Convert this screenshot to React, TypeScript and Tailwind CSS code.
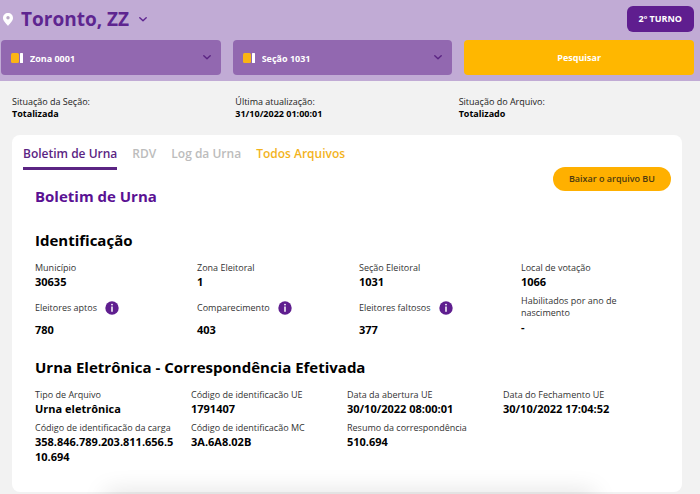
import clsx from "clsx";
import type { ReactNode } from "react";

type FieldProps = {
  label: string;
  value: string;
  info?: boolean;
  className?: string;
};

const summary = [
  { label: "Situação da Seção:", value: "Totalizada" },
  { label: "Última atualização:", value: "31/10/2022 01:00:01" },
  { label: "Situação do Arquivo:", value: "Totalizado" },
];

const identification: FieldProps[] = [
  { label: "Município", value: "30635" },
  { label: "Zona Eleitoral", value: "1" },
  { label: "Seção Eleitoral", value: "1031" },
  { label: "Local de votação", value: "1066" },
  { label: "Eleitores aptos", value: "780", info: true },
  { label: "Comparecimento", value: "403", info: true },
  { label: "Eleitores faltosos", value: "377", info: true },
  { label: "Habilitados por ano de nascimento", value: "-" },
];

const machine: FieldProps[] = [
  { label: "Tipo de Arquivo", value: "Urna eletrônica" },
  { label: "Código de identificacão UE", value: "1791407" },
  { label: "Data da abertura UE", value: "30/10/2022 08:00:01" },
  { label: "Data do Fechamento UE", value: "30/10/2022 17:04:52" },
  { label: "Código de identificacão da carga", value: "358.846.789.203.811.656.510.694" },
  { label: "Código de identificacão MC", value: "3A.6A8.02B" },
  { label: "Resumo da correspondência", value: "510.694" },
];

const tabs = [
  { label: "Boletim de Urna", className: "border-[#5b2483] text-[#5b2483]" },
  { label: "RDV", className: "border-transparent text-[#bcbcbc]" },
  { label: "Log da Urna", className: "border-transparent text-[#bcbcbc]" },
  { label: "Todos Arquivos", className: "border-transparent text-[#f3b31c]" },
];

const Chevron = ({ className }: { className?: string }) => (
  <svg viewBox="0 0 8 5" className={clsx("pointer-events-none h-[5px] w-2", className)} fill="none" aria-hidden="true">
    <path d="M0.8 0.8 4 3.8 7.2 0.8" stroke="currentColor" strokeWidth="1.4" strokeLinecap="round" strokeLinejoin="round" />
  </svg>
);

const PinIcon = () => (
  <svg viewBox="0 0 10 13" className="h-[13px] w-[10px]" aria-hidden="true">
    <path fill="#fff" d="M5 0C2.2 0 0 2.1 0 4.9 0 8.3 3.4 10.2 5 13c1.6-2.8 5-4.7 5-8.1C10 2.1 7.8 0 5 0Z" />
    <circle cx="5" cy="4.8" r="1.7" fill="#b9a9c6" />
  </svg>
);

const CardIcon = () => (
  <svg viewBox="0 0 12 10" className="pointer-events-none absolute left-[10px] h-[10px] w-3" aria-hidden="true">
    <rect width="8" height="10" rx="1.5" fill="#fbb414" />
    <rect x="9" width="3" height="10" rx="0.5" fill="#fff" />
  </svg>
);

const InfoIcon = () => (
  <svg viewBox="0 0 14 14" className="size-[14px]" aria-hidden="true">
    <circle cx="7" cy="7" r="6.7" fill="#5f1e8f" />
    <circle cx="7" cy="3.6" r="0.9" fill="#fff" />
    <path d="M7 5.5v5.3" stroke="#fff" strokeWidth="1.5" />
  </svg>
);

const FilterSelect = ({ label, value }: { label: string; value: string }) => (
  <div className="relative flex items-center">
    <CardIcon />
    <select
      aria-label={label}
      className="h-[35px] w-full appearance-none rounded-sm bg-[#9268b0] pt-[2px] pl-[29px] text-[9px] font-bold text-white"
    >
      <option>{value}</option>
    </select>
    <Chevron className="absolute right-[10px] text-[#5b2483]" />
  </div>
);

const Field = ({ label, value, info, className }: FieldProps) => (
  <div className={className}>
    <dt className={clsx("text-[9px] leading-3 text-[#333]", info && "flex h-[25px] items-center gap-2")}>
      {label}
      {info && (
        <button type="button" aria-label={`Informações: ${label}`}>
          <InfoIcon />
        </button>
      )}
    </dt>
    <dd className={clsx("text-[11px] leading-[15px] font-bold break-all", info && "pt-[2px]")}>{value}</dd>
  </div>
);

const SectionHeading = ({ children }: { children: ReactNode }) => (
  <h3 className="text-[15px] leading-5 font-bold">{children}</h3>
);

export default function App() {
  return (
    <div className="relative min-h-screen overflow-hidden bg-[#f2f2f2] font-['Open_Sans','Noto_Sans',sans-serif] text-black">
      <header className="bg-[#c1abd5] pt-[6px] pr-[6px] pb-[6px] pl-px">
        <div className="flex h-[26px] items-center pl-[2px]">
          <PinIcon />
          <div className="relative flex items-center pl-2">
            <select
              aria-label="Município"
              className="field-sizing-content appearance-none pr-[18px] text-[19px] leading-6 font-bold text-[#5e2590]"
            >
              <option>Toronto, ZZ</option>
            </select>
            <Chevron className="absolute right-0 text-[#5e2590]" />
          </div>
          <button type="button" className="ml-auto h-[26px] rounded-md bg-[#5f1e8f] px-3 text-[9px] font-bold text-white">
            2º TURNO
          </button>
        </div>
        <form className="mt-2 grid grid-cols-[22fr_22fr_23fr] gap-3">
          <FilterSelect label="Zona" value="Zona 0001" />
          <FilterSelect label="Seção" value="Seção 1031" />
          <button type="button" className="h-[35px] rounded-sm bg-[#ffb700] text-[9px] font-bold text-white">
            Pesquisar
          </button>
        </form>
      </header>

      <main className="pr-[18px] pl-3">
        <dl className="grid grid-cols-3 pt-[15px] text-[9px] leading-3">
          {summary.map((item) => (
            <div key={item.label}>
              <dt className="text-[#222]">{item.label}</dt>
              <dd className="font-bold">{item.value}</dd>
            </div>
          ))}
        </dl>

        <section className="mt-[15px] rounded-lg bg-white px-[11px] pb-7">
          <div className="flex items-start justify-between">
            <nav className="flex gap-[15px] pt-[10px]">
              {tabs.map((tab) => (
                <a key={tab.label} href="#" className={clsx("border-b-3 pb-1 text-xs leading-[18px] font-semibold", tab.className)}>
                  {tab.label}
                </a>
              ))}
            </nav>
            <button type="button" className="mt-8 h-6 rounded-full bg-[#ffb000] px-4 text-[9px] font-semibold text-[#4d3a10]">
              Baixar o arquivo BU
            </button>
          </div>

          <div className="-mt-[5px] px-3">
            <h2 className="text-[15px] leading-5 font-bold text-[#5a1193]">Boletim de Urna</h2>

            <div className="mt-6">
              <SectionHeading>Identificação</SectionHeading>
              <dl className="mt-3 grid grid-cols-4 gap-x-6 gap-y-[6px]">
                {identification.map((item) => (
                  <Field key={item.label} {...item} />
                ))}
              </dl>
            </div>

            <div className="mt-5">
              <SectionHeading>Urna Eletrônica - Correspondência Efetivada</SectionHeading>
              <dl className="mt-3 grid grid-cols-4 gap-y-[6px]">
                {machine.map((item) => (
                  <Field key={item.label} {...item} className="pr-4" />
                ))}
              </dl>
            </div>
          </div>
        </section>
      </main>

      {/* shade rising from the bottom edge */}
      <div className="pointer-events-none absolute inset-x-28 bottom-0 h-0 shadow-[0_6px_24px_6px_rgba(0,0,0,0.18)]" />
    </div>
  );
}
